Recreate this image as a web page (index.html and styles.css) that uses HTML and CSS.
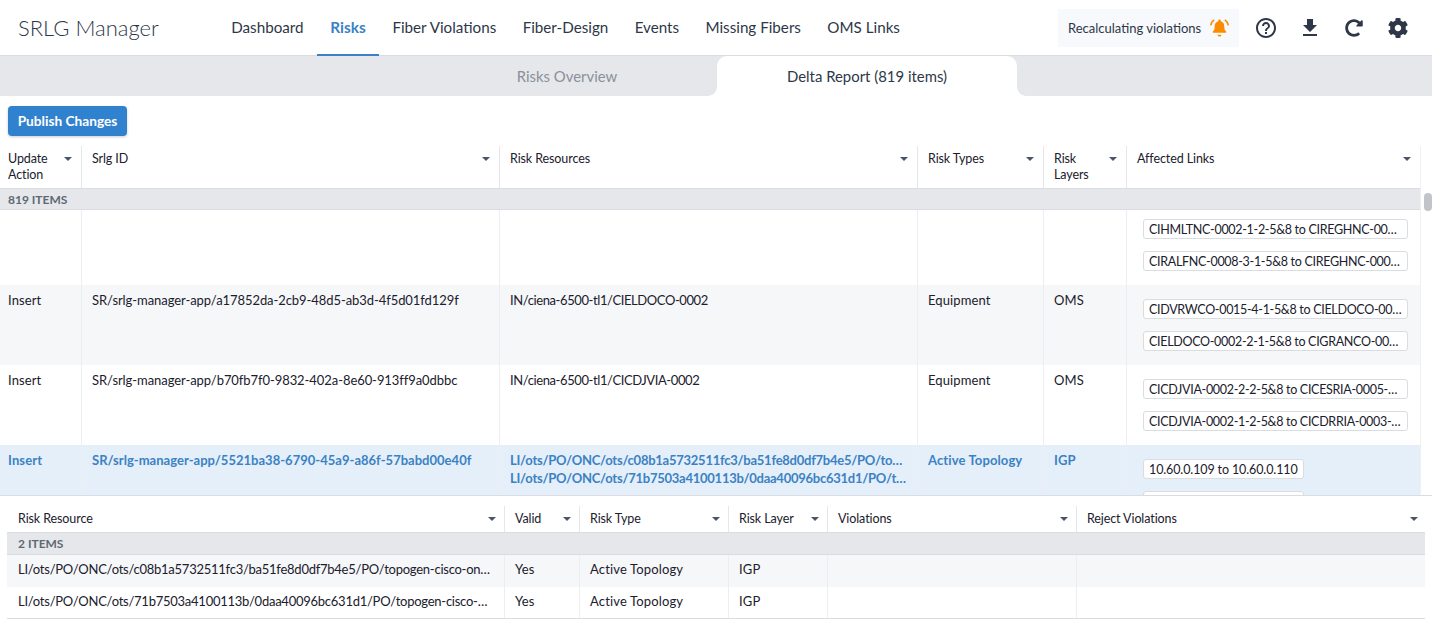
FILE: index.html
```html
<!DOCTYPE html>
<html lang="en">
<head>
<meta charset="utf-8">
<title>SRLG Manager</title>
<link rel="stylesheet" href="styles.css">
</head>
<body>
<header class="topbar">
  <div class="brand">SRLG Manager</div>
  <nav class="nav">
    <a class="nav-item">Dashboard</a>
    <a class="nav-item active">Risks</a>
    <a class="nav-item">Fiber Violations</a>
    <a class="nav-item">Fiber-Design</a>
    <a class="nav-item">Events</a>
    <a class="nav-item">Missing Fibers</a>
    <a class="nav-item">OMS Links</a>
  </nav>
  <div class="status">
    <span>Recalculating violations</span>
    <svg class="bell" viewBox="0 0 20 20"><path fill="#fb8c00" d="M10 1.500c.8 0 1.300.6 1.300 1.300v.5c2.400.6 3.700 2.500 3.700 5 0 3 .6 4.500 2 6v1.200H3v-1.200c1.400-1.500 2-3 2-6 0-2.500 1.300-4.400 3.700-5v-.5c0-.7.5-1.300 1.300-1.300zM8 17.500h4a2 2 0 0 1-4 0z"/><path fill="none" stroke="#fb8c00" stroke-width="1.800" stroke-linecap="round" d="M3.800 2.500C2.300 3.600 1.400 5 1 7M16.200 2.500c1.500 1.100 2.400 2.500 2.800 4.500"/></svg>
  </div>
  <div class="tools">
    <svg class="tool" viewBox="0 0 24 24"><path fill="#2d3748" d="M11 18h2v-2h-2v2zm1-16C6.480 2 2 6.480 2 12s4.480 10 10 10 10-4.480 10-10S17.520 2 12 2zm0 18c-4.410 0-8-3.590-8-8s3.590-8 8-8 8 3.590 8 8-3.590 8-8 8zm0-14c-2.210 0-4 1.790-4 4h2c0-1.100.9-2 2-2s2 .9 2 2c0 2-3 1.750-3 5h2c0-2.250 3-2.500 3-5 0-2.210-1.790-4-4-4z"/></svg>
    <svg class="tool" viewBox="0 0 24 24"><path fill="#2d3748" d="M19 9h-4V3H9v6H5l7 7 7-7zM5 18v2h14v-2H5z"/></svg>
    <svg class="tool" viewBox="-84 -84 680 680"><path fill="#2d3748" d="M256.455 8c66.269.119 126.437 26.233 170.859 68.685l35.715-35.715C478.149 25.851 504 36.559 504 57.941V192c0 13.255-10.745 24-24 24H345.941c-21.382 0-32.090-25.851-16.971-40.971l41.750-41.750c-30.864-28.899-70.801-44.907-113.230-45.273-92.398-.798-170.283 73.977-169.484 169.442C88.764 348.009 162.184 424 256 424c41.127 0 79.997-14.678 110.629-41.556 4.743-4.161 11.906-3.908 16.368.553l39.662 39.662c4.872 4.872 4.631 12.815-.482 17.433C378.202 479.813 319.926 504 256 504 119.034 504 8.001 392.967 8 256.002 7.999 119.193 119.646 7.755 256.455 8z"/></svg>
    <svg class="tool" viewBox="-40 -40 592 592"><path fill="#2d3748" d="M487.400 315.700l-42.600-24.600c4.300-23.200 4.300-47 0-70.200l42.600-24.600c4.900-2.800 7.100-8.600 5.500-14-11.100-35.600-30-67.800-54.700-94.600-3.800-4.100-10-5.100-14.800-2.300L380.800 110c-17.900-15.400-38.500-27.300-60.800-35.100V25.800c0-5.600-3.900-10.500-9.400-11.700-36.700-8.200-74.300-7.800-109.200 0-5.500 1.200-9.400 6.100-9.400 11.700V75c-22.200 7.900-42.800 19.800-60.800 35.100L88.700 85.500c-4.900-2.800-11-1.900-14.800 2.300-24.700 26.700-43.600 58.900-54.700 94.600-1.700 5.400.6 11.200 5.500 14L67.300 221c-4.300 23.200-4.300 47 0 70.200l-42.600 24.600c-4.900 2.800-7.100 8.600-5.500 14 11.100 35.600 30 67.800 54.700 94.600 3.800 4.100 10 5.100 14.800 2.300l42.600-24.600c17.900 15.400 38.500 27.300 60.800 35.100v49.200c0 5.600 3.900 10.500 9.400 11.700 36.700 8.200 74.300 7.800 109.200 0 5.500-1.200 9.400-6.100 9.400-11.700v-49.200c22.200-7.900 42.800-19.800 60.800-35.100l42.600 24.600c4.900 2.800 11 1.900 14.800-2.300 24.700-26.700 43.600-58.900 54.700-94.600 1.500-5.500-.7-11.300-5.600-14.100zM256 336c-44.100 0-80-35.900-80-80s35.900-80 80-80 80 35.900 80 80-35.900 80-80 80z"/></svg>
  </div>
</header>

<div class="tabs">
  <div class="tab">Risks Overview</div>
  <div class="tab tab-active">Delta Report (819 items)</div>
  <div class="tab-rest"></div>
</div>

<div class="toolbar"><button class="publish">Publish Changes</button></div>

<section class="master">
  <div class="master-main">
    <div class="grid-row head m-cols">
      <div class="hc"><span>Update<br>Action</span><i class="caret"></i></div>
      <div class="hc"><span>Srlg ID</span><i class="caret"></i></div>
      <div class="hc"><span>Risk Resources</span><i class="caret"></i></div>
      <div class="hc"><span>Risk Types</span><i class="caret"></i></div>
      <div class="hc"><span>Risk<br>Layers</span><i class="caret"></i></div>
      <div class="hc"><span>Affected Links</span><i class="caret"></i></div>
    </div>
    <div class="group">819 ITEMS</div>
    <div class="body">
      <div class="grid-row m-cols row row-scrolled">
        <div class="c"></div><div class="c"></div><div class="c"></div><div class="c"></div><div class="c"></div>
        <div class="c chips"><span class="chip">CIHMLTNC-0002-1-2-5&amp;8 to CIREGHNC-0002-1-1-5&amp;8</span><span class="chip">CIRALFNC-0008-3-1-5&amp;8 to CIREGHNC-0002-2-2-5&amp;8</span></div>
      </div>
      <div class="grid-row m-cols row alt">
        <div class="c">Insert</div><div class="c id">SR/srlg-manager-app/a17852da-2cb9-48d5-ab3d-4f5d01fd129f</div><div class="c tight">IN/ciena-6500-tl1/CIELDOCO-0002</div><div class="c">Equipment</div><div class="c">OMS</div>
        <div class="c chips"><span class="chip">CIDVRWCO-0015-4-1-5&amp;8 to CIELDOCO-0002-1-1-5&amp;8</span><span class="chip">CIELDOCO-0002-2-1-5&amp;8 to CIGRANCO-0001-1-1-5&amp;8</span></div>
      </div>
      <div class="grid-row m-cols row">
        <div class="c">Insert</div><div class="c id">SR/srlg-manager-app/b70fb7f0-9832-402a-8e60-913ff9a0dbbc</div><div class="c tight">IN/ciena-6500-tl1/CICDJVIA-0002</div><div class="c">Equipment</div><div class="c">OMS</div>
        <div class="c chips"><span class="chip">CICDJVIA-0002-2-2-5&amp;8 to CICESRIA-0005-1-1-5&amp;8</span><span class="chip">CICDJVIA-0002-1-2-5&amp;8 to CICDRRIA-0003-1-1-5&amp;8</span></div>
      </div>
      <div class="grid-row m-cols row selected">
        <div class="c">Insert</div><div class="c">SR/srlg-manager-app/5521ba38-6790-45a9-a86f-57babd00e40f</div>
        <div class="c"><div class="ell">LI/ots/PO/ONC/ots/c08b1a5732511fc3/ba51fe8d0df7b4e5/PO/topogen-cisco-one</div><div class="ell">LI/ots/PO/ONC/ots/71b7503a4100113b/0daa40096bc631d1/PO/topogen-cisco-one</div></div>
        <div class="c">Active Topology</div><div class="c">IGP</div>
        <div class="c chips"><span class="chip chip-ip">10.60.0.109 to 10.60.0.110</span><span class="chip chip-ip">10.60.0.110 to 10.60.0.109</span></div>
      </div>
    </div>
  </div>
  <div class="scrollbar"><div class="thumb"></div></div>
</section>

<section class="detail">
  <div class="grid-row dhead d-cols">
    <div class="hc"><span>Risk Resource</span><i class="caret"></i></div>
    <div class="hc"><span>Valid</span><i class="caret"></i></div>
    <div class="hc"><span>Risk Type</span><i class="caret"></i></div>
    <div class="hc"><span>Risk Layer</span><i class="caret"></i></div>
    <div class="hc"><span>Violations</span><i class="caret"></i></div>
    <div class="hc"><span>Reject Violations</span><i class="caret"></i></div>
  </div>
  <div class="dgroup">2 ITEMS</div>
  <div class="grid-row d-cols drow alt">
    <div class="dc ell">LI/ots/PO/ONC/ots/c08b1a5732511fc3/ba51fe8d0df7b4e5/PO/topogen-cisco-one-hop</div><div class="dc">Yes</div><div class="dc">Active Topology</div><div class="dc">IGP</div><div class="dc"></div><div class="dc"></div>
  </div>
  <div class="grid-row d-cols drow last">
    <div class="dc ell">LI/ots/PO/ONC/ots/71b7503a4100113b/0daa40096bc631d1/PO/topogen-cisco-one-hop</div><div class="dc">Yes</div><div class="dc">Active Topology</div><div class="dc">IGP</div><div class="dc"></div><div class="dc"></div>
  </div>
</section>
</body>
</html>
```
FILE: styles.css
```css
* { box-sizing: border-box; }
html, body { margin: 0; height: 625px; overflow: hidden; }
body { font-family: "Lato", "Open Sans", sans-serif; font-size: 13px; color: #1a202c; background: #fff; }

.topbar { display: flex; align-items: center; height: 56px; padding-left: 18px; border-bottom: 1px solid #d9dce1; }
.brand { width: 200px; font-size: 22px; font-weight: 300; color: #2d3748; white-space: nowrap; }
.nav { display: flex; align-self: stretch; flex: 1; }
.nav-item { display: flex; align-items: center; padding: 0 13.200px; font-size: 15.200px; color: #2d3748; white-space: nowrap; margin-bottom: -1px; border-bottom: 2px solid transparent; }
.nav-item.active { color: #3b82c4; font-weight: 700; border-bottom-color: #3b82c4; padding: 0 13.500px; font-size: 15.400px; }
.status { display: flex; align-items: center; justify-content: space-between; width: 181px; height: 38px; padding: 0 10px 0 10px; background: #f7f9fc; font-size: 13px; color: #2d3748; white-space: nowrap; }
.bell { width: 19px; height: 19px; }
.tools { display: flex; align-items: center; gap: 20px; padding: 0 22px 0 15px; }
.tool { width: 24px; height: 24px; display: block; }

.tabs { display: flex; height: 40px; background: #e5e7eb; }
.tab { display: flex; align-items: center; justify-content: center; width: 300px; font-size: 14.900px; color: #8a909a; }
.tab:first-child { margin-left: 417px; }
.tab-active { position: relative; background: #fff; color: #2d3748; border-radius: 10px 10px 0 0; }
.tab-active::before, .tab-active::after { content: ""; position: absolute; bottom: 0; width: 9px; height: 9px; }
.tab-active::before { left: -9px; background: radial-gradient(circle at 0 0, transparent 8.500px, #fff 9px); }
.tab-active::after { right: -9px; background: radial-gradient(circle at 100% 0, transparent 8.500px, #fff 9px); }
.tab-rest { flex: 1; }

.toolbar { height: 50px; padding: 10px 8px; }
.publish { display: block; width: 119px; height: 30px; padding: 0 0 2px; border: 0; border-radius: 4px; background: #3182ce; color: #fff; font: 700 13.700px "Lato", sans-serif; box-shadow: 0 1px 3px rgba(0,0,0,.2); }

.master { display: flex; height: 350px; border-bottom: 1px solid #d9dce1; }
.master-main { width: 1420px; display: flex; flex-direction: column; }
.scrollbar { flex: 1; position: relative; background: #fff; border-left: 1px solid #eef0f2; }
.thumb { position: absolute; top: 47px; left: 3px; width: 8px; height: 18px; border-radius: 4px; background: #c1c4c9; }

.grid-row { display: grid; }
.m-cols { grid-template-columns: 81px 418px 418px 126px 83px 294px; }
.d-cols { grid-template-columns: 497px 75px 149px 99px 249px 350px; }

.head { height: 43px; border-bottom: 1px solid #d9dce1; }
.hc { position: relative; display: flex; justify-content: space-between; padding: 5px 9px 0 10px; line-height: 16px; font-size: 12.500px; letter-spacing: -.1px; color: #1a202c; border-left: 1px solid #e5e7eb; }
.hc:first-child { border-left: 0; padding-left: 8px; }
.caret { flex: none; width: 0; height: 0; margin-top: 6px; border-left: 4px solid transparent; border-right: 4px solid transparent; border-top: 4px solid #4a5568; }

.group { height: 21px; padding-left: 8px; background: #e5e7eb; border-bottom: 1px solid #d9dce1; font-size: 12px; font-weight: 700; line-height: 21px; color: #5f6875; }

.body { flex: 1; overflow: hidden; }
.row { height: 80px; }
.row-scrolled { margin-top: -5px; }
.row .c { padding: 6px 10px 0; line-height: 18px; font-size: 13px; letter-spacing: .12px; border-left: 1px solid #eceef1; overflow: hidden; min-width: 0; }
.row .c:first-child { padding-left: 8px; border-left: 0; }
.row .id { letter-spacing: -.07px; }
.row .tight { letter-spacing: -.4px; }
.alt { background: #f6f7f9; }
.selected { background: #e5eff9; color: #3b82c4; font-weight: 700; }
.ell { white-space: nowrap; overflow: hidden; text-overflow: ellipsis; }
.row .c .ell { letter-spacing: -.25px; }
.selected .c:nth-child(2) { letter-spacing: .02px; }
.row .chips { display: flex; flex-direction: column; align-items: flex-start; gap: 12px; padding: 14px 12px 0 16px; font-weight: 400; }
.chip { display: block; max-width: 100%; height: 20px; padding: 0 5px; line-height: 19px; background: #fff; border: 1px solid #d9dce1; border-radius: 3px; font-size: 12.500px; letter-spacing: -.3px; color: #1a202c; white-space: nowrap; overflow: hidden; text-overflow: ellipsis; }
.chip-ip { letter-spacing: -.12px; }

.detail { padding: 0 7px; }
.dhead { height: 37px; border-bottom: 1px solid #d9dce1; }
.dhead .hc { align-items: center; margin-top: 10px; padding-top: 0; padding-right: 8px; padding-bottom: 1px; }
.dhead .hc:first-child { padding-left: 11px; }
.dhead .caret { margin-top: 0; }
.dgroup { height: 22px; padding-left: 11px; background: #e5e7eb; border-bottom: 1px solid #d9dce1; font-size: 12px; font-weight: 700; line-height: 21px; color: #5f6875; }
.drow { height: 32px; }
.drow.last { border-bottom: 1px solid #d9dce1; }
.dc { padding: 5px 10px 0; line-height: 18px; font-size: 13px; letter-spacing: .15px; border-left: 1px solid #eceef1; min-width: 0; }
.dc:first-child { padding-left: 11px; border-left: 0; letter-spacing: -.25px; }
```
